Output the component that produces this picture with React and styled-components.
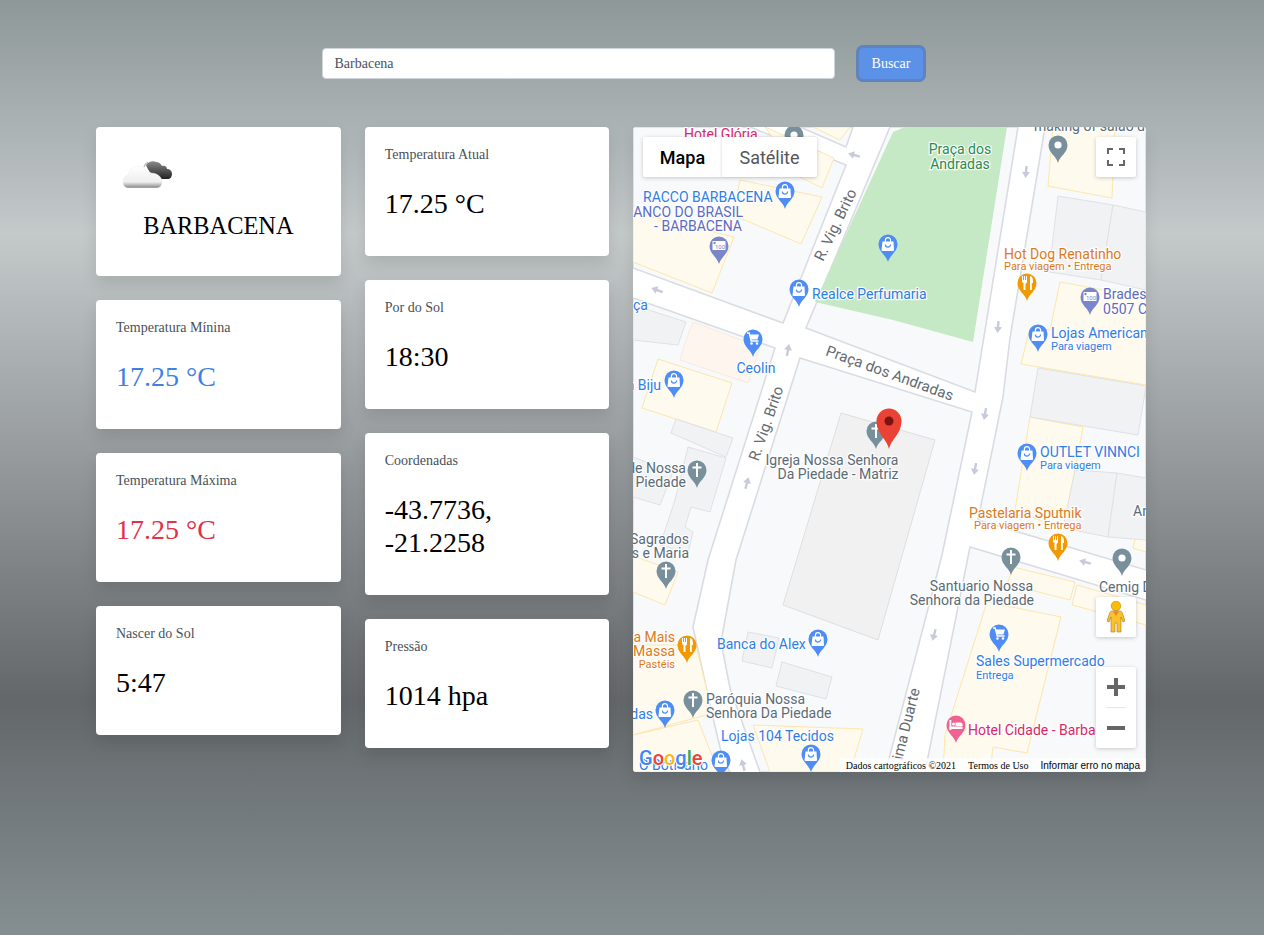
import React from 'react';
import styled, { createGlobalStyle } from 'styled-components';

const GlobalStyle = createGlobalStyle`
  html, body { margin: 0; padding: 0; }
  body {
    min-height: 935px;
    font-family: "Liberation Serif", "Times New Roman", serif;
    background: linear-gradient(180deg, #8e9899 0%, #c4c9ca 25%, #63676a 75%, #858f92 100%);
    background-repeat: no-repeat;
  }
`;

const Page = styled.div`
  width: 1264px;
  height: 935px;
  box-sizing: border-box;
  padding-top: 48px;
`;

const SearchRow = styled.form`
  display: flex;
  align-items: center;
  gap: 24px;
  padding-left: 322px;
  margin-bottom: 48px;
`;

const SearchInput = styled.input`
  width: 513px;
  height: 31px;
  box-sizing: border-box;
  padding: 0 11.5px;
  border: 1px solid #ced4da;
  border-radius: 4px;
  background: #fff;
  color: #495057;
  font-family: inherit;
  font-size: 14px;
  outline: none;
`;

const SearchButton = styled.button`
  width: 64px;
  height: 31px;
  padding: 0;
  border: 1px solid #5b92e8;
  border-radius: 4px;
  background: #5b92e8;
  color: #fff;
  font-family: inherit;
  font-size: 14px;
  box-shadow: 0 0 0 3px #5e83bd;
`;

const Dashboard = styled.main`
  display: flex;
  align-items: flex-start;
  gap: 24px;
  padding-left: 96px;
`;

const Column = styled.section`
  display: flex;
  flex-direction: column;
  gap: 24px;
  width: ${(p) => p.$width}px;
`;

const Card = styled.article`
  box-sizing: border-box;
  min-height: 129px;
  padding: 20px 20px 36px;
  border-radius: 4px;
  background: #fff;
  box-shadow: 0 8px 16px rgba(0, 0, 0, 0.1);
`;

const CityCard = styled(Card)`
  height: 149px;
  padding: 33px 26px 0;
`;

const CityName = styled.h2`
  margin: 21px -26px 0;
  font-size: 24.4px;
  font-weight: 400;
  line-height: 30px;
  text-align: center;
  color: #000;
`;

const CardLabel = styled.div`
  margin-bottom: 25px;
  font-size: 14px;
  line-height: 15px;
  color: #495057;
`;

const CardValue = styled.div`
  font-size: 28px;
  line-height: 33px;
  color: ${(p) => p.$color || '#000'};
`;

const MapPanel = styled.section`
  position: relative;
  flex: none;
  width: 513px;
  height: 645px;
  overflow: hidden;
  border-radius: 4px;
  background: #fff;
  box-shadow: 0 8px 16px rgba(0, 0, 0, 0.1);
`;

const MapCanvas = styled.svg`
  display: block;
  width: 513px;
  height: 645px;
`;

const MapLabel = styled.text`
  font-family: Roboto, "Liberation Sans", sans-serif;
  font-size: ${(p) => p.$size || 14}px;
  fill: ${(p) => p.$color};
  stroke: rgba(255, 255, 255, 0.9);
  stroke-width: 2.5px;
  paint-order: stroke;
  text-anchor: ${(p) => p.$anchor || 'start'};
`;

const GoogleMark = styled.text`
  font-family: Roboto, "Open Sans", sans-serif;
  font-size: 20px;
  font-weight: 500;
  stroke: #fff;
  stroke-width: 2px;
  paint-order: stroke;
`;

const MapTypeControl = styled.div`
  position: absolute;
  top: 10px;
  left: 10px;
  display: flex;
  height: 40px;
  border-radius: 2px;
  background: #fff;
  box-shadow: 0 1px 4px rgba(0, 0, 0, 0.2);
`;

const MapTypeButton = styled.div`
  display: flex;
  align-items: center;
  justify-content: center;
  width: ${(p) => p.$width}px;
  font-family: Roboto, "Liberation Sans", sans-serif;
  font-size: 18px;
  font-weight: ${(p) => (p.$active ? 500 : 400)};
  color: ${(p) => (p.$active ? '#000' : '#565656')};
  & + & { box-shadow: -1px 0 2px rgba(0, 0, 0, 0.1); }
`;

const MapButton = styled.div`
  position: absolute;
  right: 10px;
  top: ${(p) => p.$top}px;
  display: flex;
  align-items: center;
  justify-content: center;
  width: 40px;
  height: 40px;
  border-radius: 2px;
  background: #fff;
  box-shadow: 0 1px 4px rgba(0, 0, 0, 0.2);
`;

const ZoomControl = styled.div`
  position: absolute;
  right: 10px;
  top: 540px;
  width: 40px;
  height: 81px;
  border-radius: 2px;
  background: #fff;
  box-shadow: 0 1px 4px rgba(0, 0, 0, 0.2);
`;

const ZoomButton = styled.div`
  display: flex;
  align-items: center;
  justify-content: center;
  height: 40px;
`;

const ZoomDivider = styled.div`
  height: 1px;
  margin: 0 10px;
  background: #e6e6e6;
`;

const MapFooter = styled.div`
  position: absolute;
  right: 0;
  bottom: 0;
  display: flex;
  height: 14px;
  font-size: 10px;
  color: #000;
`;

const FooterItem = styled.span`
  height: 14px;
  padding: 0 6px;
  line-height: 15px;
  background: rgba(255, 255, 255, 0.7);
  font-family: ${(p) => (p.$sans ? '"Liberation Sans", Arial, sans-serif' : 'inherit')};
`;

const CloudSvg = styled.svg`
  display: block;
`;

// map coordinates below are page coordinates, the viewBox moves them in the panel
const BLOCKS = [
  '633,127 750,127 846,165 783,323 633,268',
  '800,127 846,147 853,127',
  '633,298 775,348 708,560 693,627 710,705 723,760 730,772 633,772',
  '800,358 972,412 942,555 890,755 885,772 760,772 730,688 721,642 736,560',
  '890,127 806,328 975,392 1018,127',
  '1045,127 1146,127 1146,570 978,520 1003,397 1010,338',
  '970,547 1146,600 1146,772 925,772',
];

const YELLOW = [
  '765,127 834,158 822,188 800,177',
  '740,180 822,197 801,244 733,215',
  '633,212 734,237 712,293 633,262',
  '813,127 840,140 850,127',
  '658,359 732,383 716,432 642,408',
  '633,592 665,605 678,572 633,556',
  '633,645 696,645 708,695 706,715 633,735',
  '633,735 698,720 713,758 718,772 633,772',
  '753,725 863,729 850,772 770,772',
  '1053,127 1115,127 1112,198 1048,186',
  '1060,282 1146,298 1146,385 1021,364 1030,328 1050,330',
  '1030,417 1083,427 1075,470 1063,530 1015,510',
  '1133,548 1146,552 1146,520 1140,520',
  '1013,567 1075,582 1070,600 1007,584',
  '1077,585 1146,605 1146,625 1072,605',
  '987,602 1061,617 1027,753 993,747 990,772 943,772 945,735',
];

const BUILDINGS = [
  '671,433 676,419 733,438 726,457',
  '688,447 726,458 710,512 691,507 685,527 693,532 688,553 660,545 675,500',
  '633,457 673,472 660,505 633,497',
  '633,305 686,322 678,345 633,340',
  '748,632 779,638 772,668 742,661',
  '782,662 832,677 826,699 776,686',
  '1058,196 1113,205 1101,280 1049,272',
  '1113,205 1146,212 1146,290 1101,280',
  '1038,368 1146,386 1138,435 1030,417',
  '1075,470 1117,473 1108,537 1063,528',
  '1117,473 1146,478 1146,540 1108,537',
];

const ARROWS = [
  [854, 155, -75], [657, 290, -70], [1026, 172, 185], [998, 327, 185], [985, 414, 190],
  [975, 469, 190], [788, 350, 10], [747, 483, 15], [934, 635, 195], [1085, 562, -75],
  [743, 765, -15],
];

const BLUE = '#4e8df5';
const SLATE = '#78909c';
const ORANGE = '#f29900';
const PURPLE = '#7986cb';

const PINS = [
  [794, 153, SLATE, 'dot'], [785, 209, BLUE, 'bag'], [888, 262, BLUE, 'bag'], [799, 307, BLUE, 'bag'],
  [753, 357, BLUE, 'cart'], [674, 398, BLUE, 'bag'], [1038, 352, BLUE, 'bag'], [1027, 471, BLUE, 'bag'],
  [818, 657, BLUE, 'bag'], [665, 728, BLUE, 'bag'], [721, 778, BLUE, 'bag'], [811, 772, BLUE, 'bag'],
  [999, 652, BLUE, 'cart'], [876, 449, SLATE, 'cross'], [697, 488, SLATE, 'cross'], [666, 589, SLATE, 'cross'],
  [693, 718, SLATE, 'cross'], [1011, 575, SLATE, 'cross'], [1058, 163, SLATE, 'dot'], [1122, 576, SLATE, 'dot'],
  [1027, 301, ORANGE, 'food'], [1058, 561, ORANGE, 'food'], [687, 663, ORANGE, 'food'],
  [719, 264, PURPLE, 'atm'], [1090, 315, PURPLE, 'atm'], [956, 743, '#f06292', 'hotel'],
];

const TEXT_BLUE = '#2f7de6';
const TEXT_GRAY = '#5b6b77';
const TEXT_ROAD = '#646a70';
const TEXT_ORANGE = '#dd7a1a';
const TEXT_PURPLE = '#5c6bc0';
const TEXT_PINK = '#d8286a';

const LABELS = [
  { t: 'Hotel Glória', x: 684, y: 139, c: TEXT_PINK },
  { t: 'making of salão de', x: 1034, y: 131, c: TEXT_GRAY },
  { t: 'Praça dos', x: 960, y: 154, c: '#2a8a50', a: 'middle' },
  { t: 'Andradas', x: 960, y: 169, c: '#2a8a50', a: 'middle' },
  { t: 'RACCO BARBACENA', x: 643, y: 202, c: TEXT_BLUE },
  { t: 'BANCO DO BRASIL', x: 743, y: 217, c: TEXT_PURPLE, a: 'end' },
  { t: '- BARBACENA', x: 742, y: 231, c: TEXT_PURPLE, a: 'end' },
  { t: 'Realce Perfumaria', x: 812, y: 299, c: TEXT_BLUE },
  { t: 'Hot Dog Renatinho', x: 1004, y: 259, c: TEXT_ORANGE },
  { t: 'Para viagem • Entrega', x: 1004, y: 270, c: TEXT_ORANGE, s: 11 },
  { t: 'Bradesco', x: 1103, y: 299, c: TEXT_PURPLE },
  { t: '0507 Centro', x: 1103, y: 314, c: TEXT_PURPLE },
  { t: 'Lojas Americanas', x: 1051, y: 338, c: TEXT_BLUE },
  { t: 'Para viagem', x: 1051, y: 350, c: TEXT_BLUE, s: 11 },
  { t: 'ça', x: 633, y: 310, c: TEXT_BLUE },
  { t: 'Ceolin', x: 756, y: 373, c: TEXT_BLUE, a: 'middle' },
  { t: 'a Biju', x: 661, y: 390, c: TEXT_BLUE, a: 'end' },
  { t: 'Igreja Nossa Senhora', x: 832, y: 465, c: TEXT_GRAY, a: 'middle' },
  { t: 'Da Piedade - Matriz', x: 838, y: 479, c: TEXT_GRAY, a: 'middle' },
  { t: 'de Nossa', x: 686, y: 473, c: TEXT_GRAY, a: 'end' },
  { t: 'Piedade', x: 686, y: 487, c: TEXT_GRAY, a: 'end' },
  { t: 'Sagrados', x: 689, y: 544, c: TEXT_GRAY, a: 'end' },
  { t: 's e Maria', x: 689, y: 558, c: TEXT_GRAY, a: 'end' },
  { t: 'OUTLET VINNCI', x: 1040, y: 457, c: TEXT_BLUE },
  { t: 'Para viagem', x: 1040, y: 469, c: TEXT_BLUE, s: 11 },
  { t: 'Pastelaria Sputnik', x: 969, y: 518, c: TEXT_ORANGE },
  { t: 'Para viagem • Entrega', x: 974, y: 529, c: TEXT_ORANGE, s: 11 },
  { t: 'An', x: 1133, y: 516, c: TEXT_GRAY },
  { t: 'Santuario Nossa', x: 1033, y: 591, c: TEXT_GRAY, a: 'end' },
  { t: 'Senhora da Piedade', x: 1034, y: 605, c: TEXT_GRAY, a: 'end' },
  { t: 'Cemig D', x: 1099, y: 592, c: TEXT_GRAY },
  { t: 'a Mais', x: 675, y: 642, c: TEXT_ORANGE, a: 'end' },
  { t: 'Massa', x: 675, y: 656, c: TEXT_ORANGE, a: 'end' },
  { t: 'Pastéis', x: 675, y: 668, c: TEXT_ORANGE, a: 'end', s: 11 },
  { t: 'Banca do Alex', x: 717, y: 649, c: TEXT_BLUE },
  { t: 'Paróquia Nossa', x: 706, y: 704, c: TEXT_GRAY },
  { t: 'Senhora Da Piedade', x: 706, y: 718, c: TEXT_GRAY },
  { t: 'das', x: 653, y: 719, c: TEXT_BLUE, a: 'end' },
  { t: 'Lojas 104 Tecidos', x: 721, y: 741, c: TEXT_BLUE },
  { t: 'O Boticário', x: 639, y: 770, c: TEXT_BLUE },
  { t: 'Sales Supermercado', x: 976, y: 666, c: TEXT_BLUE },
  { t: 'Entrega', x: 976, y: 679, c: TEXT_BLUE, s: 11 },
  { t: 'Hotel Cidade - Barbacena', x: 968, y: 735, c: TEXT_PINK },
];

const ROAD_LABELS = [
  { t: 'R. Vig. Brito', x: 840, y: 227, r: -64 },
  { t: 'R. Vig. Brito', x: 771, y: 425, r: -71 },
  { t: 'Praça dos Andradas', x: 888, y: 378, r: 20 },
  { t: 'ima Duarte', x: 911, y: 725, r: -76 },
];

const PinIcon = ({ kind, color }) => {
  if (kind === 'dot') return <circle cx="0" cy="-18" r="3.6" fill="#fff" />;
  if (kind === 'cross') {
    return (
      <g fill="#fff">
        <rect x="-1" y="-25" width="2" height="14" />
        <rect x="-4.5" y="-21.5" width="9" height="2" />
      </g>
    );
  }
  if (kind === 'cart') {
    return (
      <g>
        <path d="M-6 -24h2.2l2 8h7.4" fill="none" stroke="#fff" strokeWidth="1.4" />
        <path d="M-3.2 -22.5h9.2l-1.6 5h-6.3z" fill="#fff" />
        <circle cx="-1.5" cy="-13.5" r="1.3" fill="#fff" />
        <circle cx="4" cy="-13.5" r="1.3" fill="#fff" />
      </g>
    );
  }
  if (kind === 'food') {
    return (
      <g fill="#fff">
        <path d="M-5 -25h1v4h1v-4h1v4h1v-4h1v6c0 1-1 1.5-1.5 1.8V-11h-2v-7.2C-5 -18.5-5 -19-5 -20z" />
        <path d="M3 -25c2 0 3 2 3 6v1H4.8v7H3z" />
      </g>
    );
  }
  if (kind === 'atm') {
    return (
      <g>
        <rect x="-6.5" y="-23" width="13" height="9" fill="#fff" />
        <circle cx="-4.5" cy="-21" r="1.2" fill={color} />
        <text x="1" y="-15.5" fontSize="6" fontFamily="Roboto, sans-serif" textAnchor="middle" fill={color}>100</text>
      </g>
    );
  }
  if (kind === 'hotel') {
    return (
      <g fill="#fff">
        <rect x="-6.5" y="-23" width="1.8" height="10" />
        <rect x="-6.5" y="-16.5" width="13" height="2.5" />
        <circle cx="-2.5" cy="-19" r="1.5" />
        <path d="M-0.5 -20.5h5a2 2 0 0 1 2 2V-17h-7z" />
      </g>
    );
  }
  return (
    <g>
      <path d="M-2.6 -20v-1.7a2.6 2.6 0 0 1 5.2 0V-20" fill="none" stroke="#fff" strokeWidth="1.2" />
      <path d="M-5.5 -20.5h11l.5 8.5a1 1 0 0 1-1 1h-10.5a1 1 0 0 1-1-1z" fill="#fff" />
      <path d="M-2.6 -17.5a2.6 2.6 0 0 0 5.2 0" fill="none" stroke={color} strokeWidth="1.2" />
    </g>
  );
};

const MapPin = ({ x, y, color, kind }) => (
  <g transform={`translate(${x} ${y})`}>
    <path d="M0 0C-1.8 -7 -9.5 -10 -9.5 -18A9.5 9.5 0 1 1 9.5 -18C9.5 -10 1.8 -7 0 0Z" fill={color} />
    <PinIcon kind={kind} color={color} />
  </g>
);

const MapDrawing = () => (
  <MapCanvas viewBox="633 127 513 645" xmlns="http://www.w3.org/2000/svg">
    <rect x="633" y="127" width="513" height="645" fill="#fff" />
    {BLOCKS.map((pts) => (
      <polygon key={pts} points={pts} fill="#f8f9fb" stroke="#d9dce2" strokeWidth="1.6" />
    ))}
    <polygon points="815,302 893,132 905,127 1007,127 973,342 893,320" fill="#c5e8c5" />
    {YELLOW.map((pts) => (
      <polygon key={pts} points={pts} fill="#fffaee" stroke="#fde6ab" strokeWidth="1" />
    ))}
    <polygon points="686,340 680,360 748,383 760,347 693,322" fill="#fdf5ee" stroke="#f8ebdf" strokeWidth="1" />
    {BUILDINGS.map((pts) => (
      <polygon key={pts} points={pts} fill="#f1f2f3" stroke="#dfe1e5" strokeWidth="1" />
    ))}
    <polygon points="841,413 935,440 878,640 783,605" fill="#f1f1f2" stroke="#dedfe2" strokeWidth="1" />
    {ARROWS.map(([x, y, r]) => (
      <path
        key={`${x}-${y}`}
        transform={`translate(${x} ${y}) rotate(${r})`}
        d="M0 -6L4 0H1.2V6H-1.2V0H-4Z"
        fill="#c6cadb"
      />
    ))}
    {ROAD_LABELS.map((l) => (
      <MapLabel key={l.x} x={l.x} y={l.y} $size={15} $color={TEXT_ROAD} $anchor="middle" transform={`rotate(${l.r} ${l.x} ${l.y})`}>
        {l.t}
      </MapLabel>
    ))}
    {LABELS.map((l) => (
      <MapLabel key={`${l.t}-${l.x}`} x={l.x} y={l.y} $color={l.c} $size={l.s} $anchor={l.a}>
        {l.t}
      </MapLabel>
    ))}
    {PINS.map(([x, y, color, kind]) => (
      <MapPin key={`${x}-${y}`} x={x} y={y} color={color} kind={kind} />
    ))}
    <g transform="translate(889 449)">
      <path d="M0 0C-2 -10 -12.5 -15 -12.5 -28A12.5 12.5 0 1 1 12.5 -28C12.5 -15 2 -10 0 0Z" fill="#ea4335" />
      <circle cx="0" cy="-28" r="4.5" fill="#7a1410" />
    </g>
    <GoogleMark x="639" y="765">
      <tspan fill="#4285f4">G</tspan>
      <tspan fill="#ea4335">o</tspan>
      <tspan fill="#fbbc05">o</tspan>
      <tspan fill="#4285f4">g</tspan>
      <tspan fill="#34a853">l</tspan>
      <tspan fill="#ea4335">e</tspan>
    </GoogleMark>
  </MapCanvas>
);

const CloudIcon = () => (
  <CloudSvg width="52" height="30" viewBox="0 0 52 30" xmlns="http://www.w3.org/2000/svg">
    <defs>
      <linearGradient id="whiteCloud" x1="0" y1="0" x2="0" y2="1">
        <stop offset="0" stopColor="#ffffff" />
        <stop offset="0.72" stopColor="#efefef" />
        <stop offset="0.86" stopColor="#bbbbbb" />
        <stop offset="1" stopColor="#808080" />
      </linearGradient>
      <linearGradient id="darkCloud" x1="0" y1="0" x2="0" y2="1">
        <stop offset="0" stopColor="#8c8c8c" />
        <stop offset="0.6" stopColor="#4c4c4c" />
        <stop offset="1" stopColor="#222222" />
      </linearGradient>
    </defs>
    <path d="M24 5c2-3 7-5 10-3c3 0 5 2 6 4c3-1 5 1 5 3c3 0 5 2 5 5c0 3-2 5-4 5H34c-4-3-8-9-10-14z" fill="url(#darkCloud)" />
    <path d="M26 2a8 8 0 0 0-4 5" fill="none" stroke="#bdbdbd" strokeWidth="1.2" />
    <path d="M6 28c-3 0-5-3-5-6c0-4 2-6 5-7c1-6 5-9 9-9c5 0 8 2 10 7c1-1 3-1 4 0c5 0 11 3 11 9c0 3-2 6-5 6z" fill="url(#whiteCloud)" stroke="#ececec" strokeWidth="0.5" />
  </CloudSvg>
);

const FullscreenIcon = () => (
  <svg width="18" height="18" viewBox="0 0 18 18" xmlns="http://www.w3.org/2000/svg">
    <path d="M0 6V0h6v2H2v4zM12 0h6v6h-2V2h-4zM18 12v6h-6v-2h4v-4zM6 18H0v-6h2v4h4z" fill="#666" />
  </svg>
);

const Pegman = () => (
  <svg width="18" height="32" viewBox="0 0 18 32" xmlns="http://www.w3.org/2000/svg">
    <circle cx="9" cy="5" r="4.8" fill="#fbbc04" stroke="#a87a10" strokeWidth="0.5" />
    <path d="M5 10h8c1 0 2 1 2.5 2.5L18 20l-2 1-2-5v15h-4v-9H8v9H4V16l-2 5-2-1 2.5-7.500C3 11 4 10 5 10z" fill="#fcc02e" stroke="#9a7a20" strokeWidth="0.6" />
    <path d="M6 10.500h6L9 15z" fill="#e8892a" />
  </svg>
);

const PlusIcon = () => (
  <svg width="18" height="18" viewBox="0 0 18 18" xmlns="http://www.w3.org/2000/svg">
    <path d="M7 0h4v7h7v4h-7v7H7v-7H0V7h7z" fill="#666" />
  </svg>
);

const MinusIcon = () => (
  <svg width="18" height="4" viewBox="0 0 18 4" xmlns="http://www.w3.org/2000/svg">
    <rect width="18" height="4" fill="#666" />
  </svg>
);

const InfoCard = ({ label, value, color }) => (
  <Card>
    <CardLabel>{label}</CardLabel>
    <CardValue $color={color}>{value}</CardValue>
  </Card>
);

const App = () => {
  return (
    <React.Fragment>
      <GlobalStyle />
      <Page>
        <SearchRow onSubmit={(e) => e.preventDefault()}>
          <SearchInput defaultValue="Barbacena" />
          <SearchButton type="submit">Buscar</SearchButton>
        </SearchRow>
        <Dashboard>
          <Column $width={244.75}>
            <CityCard>
              <CloudIcon />
              <CityName>BARBACENA</CityName>
            </CityCard>
            <InfoCard label="Temperatura Mínina" value="17.25 °C" color="#3f80e4" />
            <InfoCard label="Temperatura Máxima" value="17.25 °C" color="#e0324a" />
            <InfoCard label="Nascer do Sol" value="5:47" />
          </Column>
          <Column $width={244.25}>
            <InfoCard label="Temperatura Atual" value="17.25 °C" />
            <InfoCard label="Por do Sol" value="18:30" />
            <InfoCard label="Coordenadas" value="-43.7736, -21.2258" />
            <InfoCard label="Pressão" value="1014 hpa" />
          </Column>
          <MapPanel>
            <MapDrawing />
            <MapTypeControl>
              <MapTypeButton $width={79} $active>Mapa</MapTypeButton>
              <MapTypeButton $width={95}>Satélite</MapTypeButton>
            </MapTypeControl>
            <MapButton $top={10}><FullscreenIcon /></MapButton>
            <MapButton $top={470}><Pegman /></MapButton>
            <ZoomControl>
              <ZoomButton><PlusIcon /></ZoomButton>
              <ZoomDivider />
              <ZoomButton><MinusIcon /></ZoomButton>
            </ZoomControl>
            <MapFooter>
              <FooterItem>Dados cartográficos ©2021</FooterItem>
              <FooterItem>Termos de Uso</FooterItem>
              <FooterItem $sans>Informar erro no mapa</FooterItem>
            </MapFooter>
          </MapPanel>
        </Dashboard>
      </Page>
    </React.Fragment>
  );
};

export default App;
